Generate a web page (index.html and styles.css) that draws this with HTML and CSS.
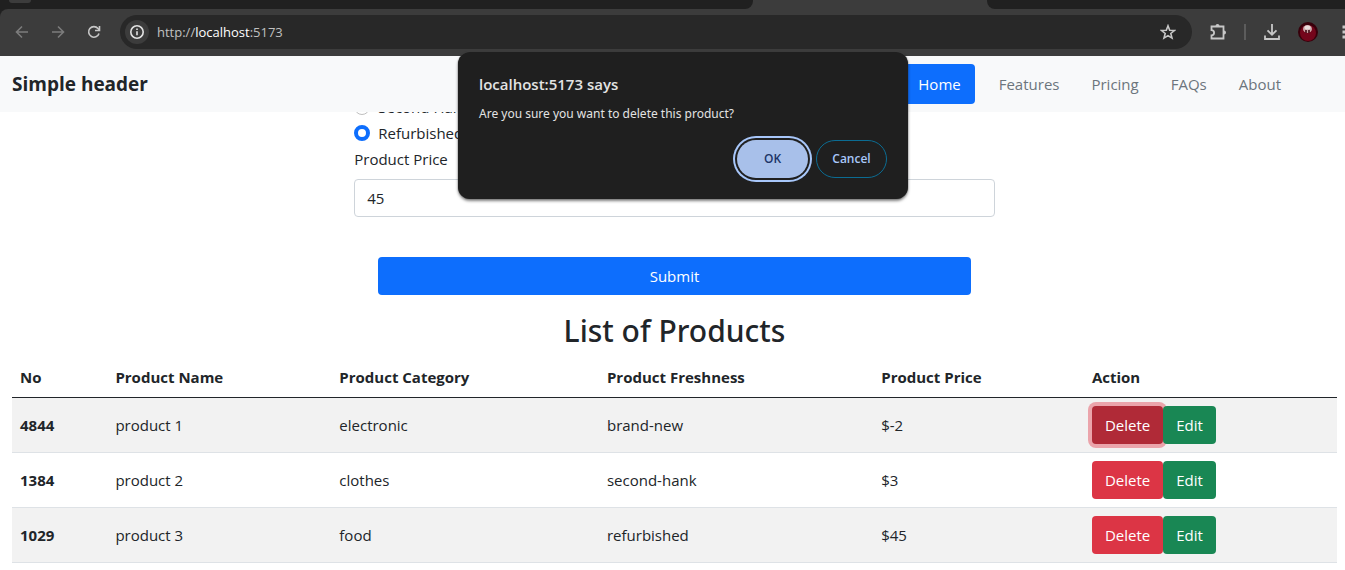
FILE: index.html
```html
<!DOCTYPE html>
<html lang="en">
<head>
<meta charset="utf-8">
<title>List of Products</title>
<link rel="stylesheet" href="styles.css">
</head>
<body>
<div class="browser">
  <div class="tab-strip">
    <div class="tabs-before"><span class="tab-search"></span></div>
    <div class="tab-active"></div>
    <div class="tabs-after"></div>
  </div>
  <div class="toolbar">
    <button class="tool dim" type="button" aria-label="Back"><svg viewBox="0 0 16 16"><path d="M14 8H2.500M8 2.500 2.500 8 8 13.500"/></svg></button>
    <button class="tool dim" type="button" aria-label="Forward"><svg viewBox="0 0 16 16"><path d="M2 8h11.500M8 2.500 13.500 8 8 13.500"/></svg></button>
    <button class="tool" type="button" aria-label="Reload"><svg viewBox="0 0 16 16"><path d="M13 9.500A5.300 5.300 0 1 1 12 4.500L13.300 6"/><path d="M13.500 2v4.500H9"/></svg></button>
    <div class="omnibox">
      <button class="site-info" type="button" aria-label="Site information"><svg viewBox="0 0 16 16"><circle cx="8" cy="8" r="6.200"/><path d="M8 7.300v4M8 4.500v1.600"/></svg></button>
      <span class="url">http://<b>localhost</b>:5173</span>
      <button class="star" type="button" aria-label="Bookmark"><svg viewBox="0 0 16 16"><path d="m8 1.800 1.700 4.400 4.700.300-3.600 3 1.200 4.600L8 11.600l-4 2.500 1.200-4.600-3.600-3 4.700-.300z"/></svg></button>
    </div>
    <button class="tool" type="button" aria-label="Extensions"><svg class="big" viewBox="0 0 18 18"><path d="M2.500 3.500h12v12h-12v-3.200a2.600 2.600 0 0 0 0-5.200z"/><path class="solid" d="M6.500 3a2 2 0 0 1 4 0zM15 7.500a2 2 0 0 1 0 4z"/></svg></button>
    <span class="divider"></span>
    <button class="tool" type="button" aria-label="Downloads"><svg class="big" viewBox="0 0 18 18"><path d="M9 1v10.500M4.500 7.300 9 11.700l4.500-4.400M2 12.500V16h14v-3.500"/></svg></button>
    <button class="tool" type="button" aria-label="Profile"><svg class="avatar" viewBox="0 0 20 20"><circle cx="10" cy="10" r="10" fill="#37000b"/><circle cx="10" cy="11" r="8" fill="#74051b"/><ellipse cx="9.500" cy="7" rx="4.500" ry="4" fill="#c9a3a5"/><ellipse cx="9.500" cy="5.500" rx="3" ry="2" fill="#e8dcdc"/><path d="M8 8v3M11 8v3" stroke="#37000b" stroke-width="1.500"/></svg></button>
    <button class="tool" type="button" aria-label="Menu"><svg class="big" viewBox="0 0 18 18"><path class="solid" d="M7.500 2.500h3v3h-3zM7.500 7.500h3v3h-3zM7.500 12.500h3v3h-3z"/></svg></button>
  </div>
</div>

<header class="site-header">
  <a class="brand" href="#">Simple header</a>
  <nav class="nav">
    <a class="nav-link active" href="#">Home</a>
    <a class="nav-link" href="#">Features</a>
    <a class="nav-link" href="#">Pricing</a>
    <a class="nav-link" href="#">FAQs</a>
    <a class="nav-link" href="#">About</a>
  </nav>
</header>

<main class="page">
  <form class="product-form">
    <div class="scrolled">
      <label class="check"><input type="radio" name="freshness">Second Hank</label>
    </div>
    <label class="check"><input type="radio" name="freshness" checked>Refurbished</label>
    <label class="price-label" for="price">Product Price</label>
    <input class="price" id="price" type="text" value="45">
    <button class="submit" type="button">Submit</button>
  </form>
  <h2 class="title">List of Products</h2>
  <table class="products">
    <thead>
      <tr><th class="c-no">No</th><th class="c-name">Product Name</th><th class="c-cat">Product Category</th><th class="c-fresh">Product Freshness</th><th class="c-price">Product Price</th><th>Action</th></tr>
    </thead>
    <tbody>
      <tr><th>4844</th><td>product 1</td><td>electronic</td><td>brand-new</td><td>$-2</td><td><div class="actions"><button class="btn delete pressed" type="button">Delete</button><button class="btn edit" type="button">Edit</button></div></td></tr>
      <tr><th>1384</th><td>product 2</td><td>clothes</td><td>second-hank</td><td>$3</td><td><div class="actions"><button class="btn delete" type="button">Delete</button><button class="btn edit" type="button">Edit</button></div></td></tr>
      <tr><th>1029</th><td>product 3</td><td>food</td><td>refurbished</td><td>$45</td><td><div class="actions"><button class="btn delete" type="button">Delete</button><button class="btn edit" type="button">Edit</button></div></td></tr>
    </tbody>
  </table>
</main>

<div class="dialog" role="alertdialog" aria-labelledby="dialog-title" aria-describedby="dialog-text">
  <h1 class="dialog-title" id="dialog-title">localhost:5173 says</h1>
  <p class="dialog-text" id="dialog-text">Are you sure you want to delete this product?</p>
  <div class="dialog-actions">
    <button class="pill ok" type="button">OK</button>
    <button class="pill cancel" type="button">Cancel</button>
  </div>
</div>
</body>
</html>
```
FILE: styles.css
```css
* { box-sizing: border-box; }
body {
  margin: 0;
  background: #fff;
  color: #212529;
  font: 15px/24px "Open Sans", "Noto Sans", sans-serif;
  overflow: hidden;
}
button, input { font: inherit; margin: 0; }
button { cursor: pointer; }
a { color: inherit; text-decoration: none; }

/* Browser chrome */
.browser { background: #202020; overflow: hidden; }
.tab-strip { display: flex; height: 9px; background: linear-gradient(to right, #202020 50%, #3c3c3c 50%); }
.tabs-before { flex: 753; background: #202020; border-bottom-right-radius: 8px; }
.tab-active { flex: 234; background: #3c3c3c; }
.tabs-after { flex: 358; background: #202020; border-bottom-left-radius: 8px; }
.tab-search {
  display: block;
  width: 22px;
  height: 3px;
  margin-left: 9px;
  background: #3c3c3c;
  border-radius: 0 0 11px 11px;
}
.toolbar {
  display: flex;
  align-items: center;
  height: 47px;
  margin-right: -17px;
  padding: 0 0 2px 4px;
  background: #3c3c3c;
  border-top-left-radius: 8px;
}
.toolbar button { border: 0; padding: 0; background: none; color: #c7c7c7; }
.tool { flex: 0 0 36px; height: 36px; display: grid; place-items: center; }
.toolbar .dim { color: #7c7c7c; }
.toolbar svg { display: block; width: 16px; height: 16px; fill: none; stroke: currentColor; stroke-width: 1.6; }
.toolbar svg.big { width: 18px; height: 18px; stroke-width: 1.8; }
.toolbar svg.avatar { width: 20px; height: 20px; stroke: none; }
.toolbar .solid { fill: currentColor; stroke: none; }
.omnibox {
  flex: 1;
  display: flex;
  align-items: center;
  gap: 8px;
  height: 34px;
  margin: 0 8px;
  padding: 0 16px 0 5px;
  border-radius: 17px;
  background: #282828;
}
.toolbar .site-info { display: grid; place-items: center; width: 24px; height: 24px; border-radius: 50%; background: #3c3c3c; color: #e3e3e3; }
.url { flex: 1; font-size: 13px; color: #c0c0c0; }
.url b { font-weight: 400; color: #fff; }
.divider { flex: none; width: 2px; height: 16px; margin: 0 8px; background: #5c5c5c; }

/* Site header */
.site-header {
  position: relative;
  z-index: 1;
  display: flex;
  align-items: center;
  justify-content: space-between;
  padding: 8px 48px 8px 12px;
  background: #f8f9fa;
}
.brand { font-size: 19px; font-weight: 700; }
.nav { display: flex; }
.nav-link { padding: 8px 16px; color: #6c757d; }
.nav-link.active { margin-right: 8px; padding: 8px 14px; border-radius: 4px; background: #0d6efd; color: #fff; }

/* Form */
.page { padding: 0 8px 0 12px; }
.product-form { display: flex; flex-direction: column; width: calc(50% - 22px); margin: 0 auto; }
.scrolled { display: flex; flex-direction: column; justify-content: flex-end; height: 7px; margin-bottom: 2px; }
.check { display: flex; align-items: center; gap: 8px; }
.check input {
  appearance: none;
  width: 16px;
  height: 16px;
  border: 1px solid #bfbfbf;
  border-radius: 50%;
  background: #fff;
}
.check input:checked { border: 4px solid #0d6efd; }
.price-label { margin: 2px 0 8px; }
.price { width: 100%; height: 38px; padding: 6px 12px; border: 1px solid #ced4da; border-radius: 4px; color: #212529; }
.submit { height: 38px; margin: 40px 24px 0; border: 0; border-radius: 4px; background: #0d6efd; color: #fff; }

/* Products */
.title { margin: 17px 0 8px; font-family: "Noto Sans", "Open Sans", sans-serif; font-size: 30px; line-height: 38px; font-weight: 500; text-align: center; }
.products { width: 100%; table-layout: fixed; border-collapse: collapse; text-align: left; }
.products th, .products td { padding: 8px; border-bottom: 1px solid #dee2e6; }
.products thead th { padding: 7px 8px 8px; border-bottom-color: #212529; }
.products tbody tr:nth-child(odd) { background: #f2f2f2; }
.c-no { width: 7.2%; }
.c-name { width: 16.9%; }
.c-cat { width: 20.2%; }
.c-fresh { width: 20.7%; }
.c-price { width: 15.9%; }
.actions { display: flex; }
.btn { height: 38px; padding: 0 13px; border: 0; border-radius: 4px; color: #fff; }
.delete { background: #dc3545; }
.edit { position: relative; background: #198754; }
.delete.pressed { background: #b02a37; box-shadow: 0 0 0 4px #eba4ab; }

/* Dialog */
.dialog {
  position: absolute;
  z-index: 2;
  top: 52px;
  left: 458px;
  width: 450px;
  padding: 20px 21px 21px;
  border-radius: 12px;
  background: #1f1f1f;
  color: #e3e3e3;
  box-shadow: 0 0 1px #4a4a4a, 0 2px 3px rgba(0, 0, 0, .5);
}
.dialog-title { margin: 0 0 8px; font-size: 15px; line-height: 24px; font-weight: 600; }
.dialog-text { margin: 0 0 16px; font-family: "Noto Sans", "Open Sans", sans-serif; font-size: 12px; line-height: 20px; }
.dialog-actions { display: flex; justify-content: flex-end; gap: 8px; }
.pill { min-width: 71px; height: 38px; padding: 0 14px; border-radius: 19px; font-size: 12px; font-weight: 600; }
.ok { border: 0; background: #a8c0ea; color: #1c3468; box-shadow: 0 0 0 2px #1f1f1f, 0 0 0 4px #a8c7fa; }
.cancel { border: 1px solid #0b6c93; background: none; color: #a8c7fa; }
```
